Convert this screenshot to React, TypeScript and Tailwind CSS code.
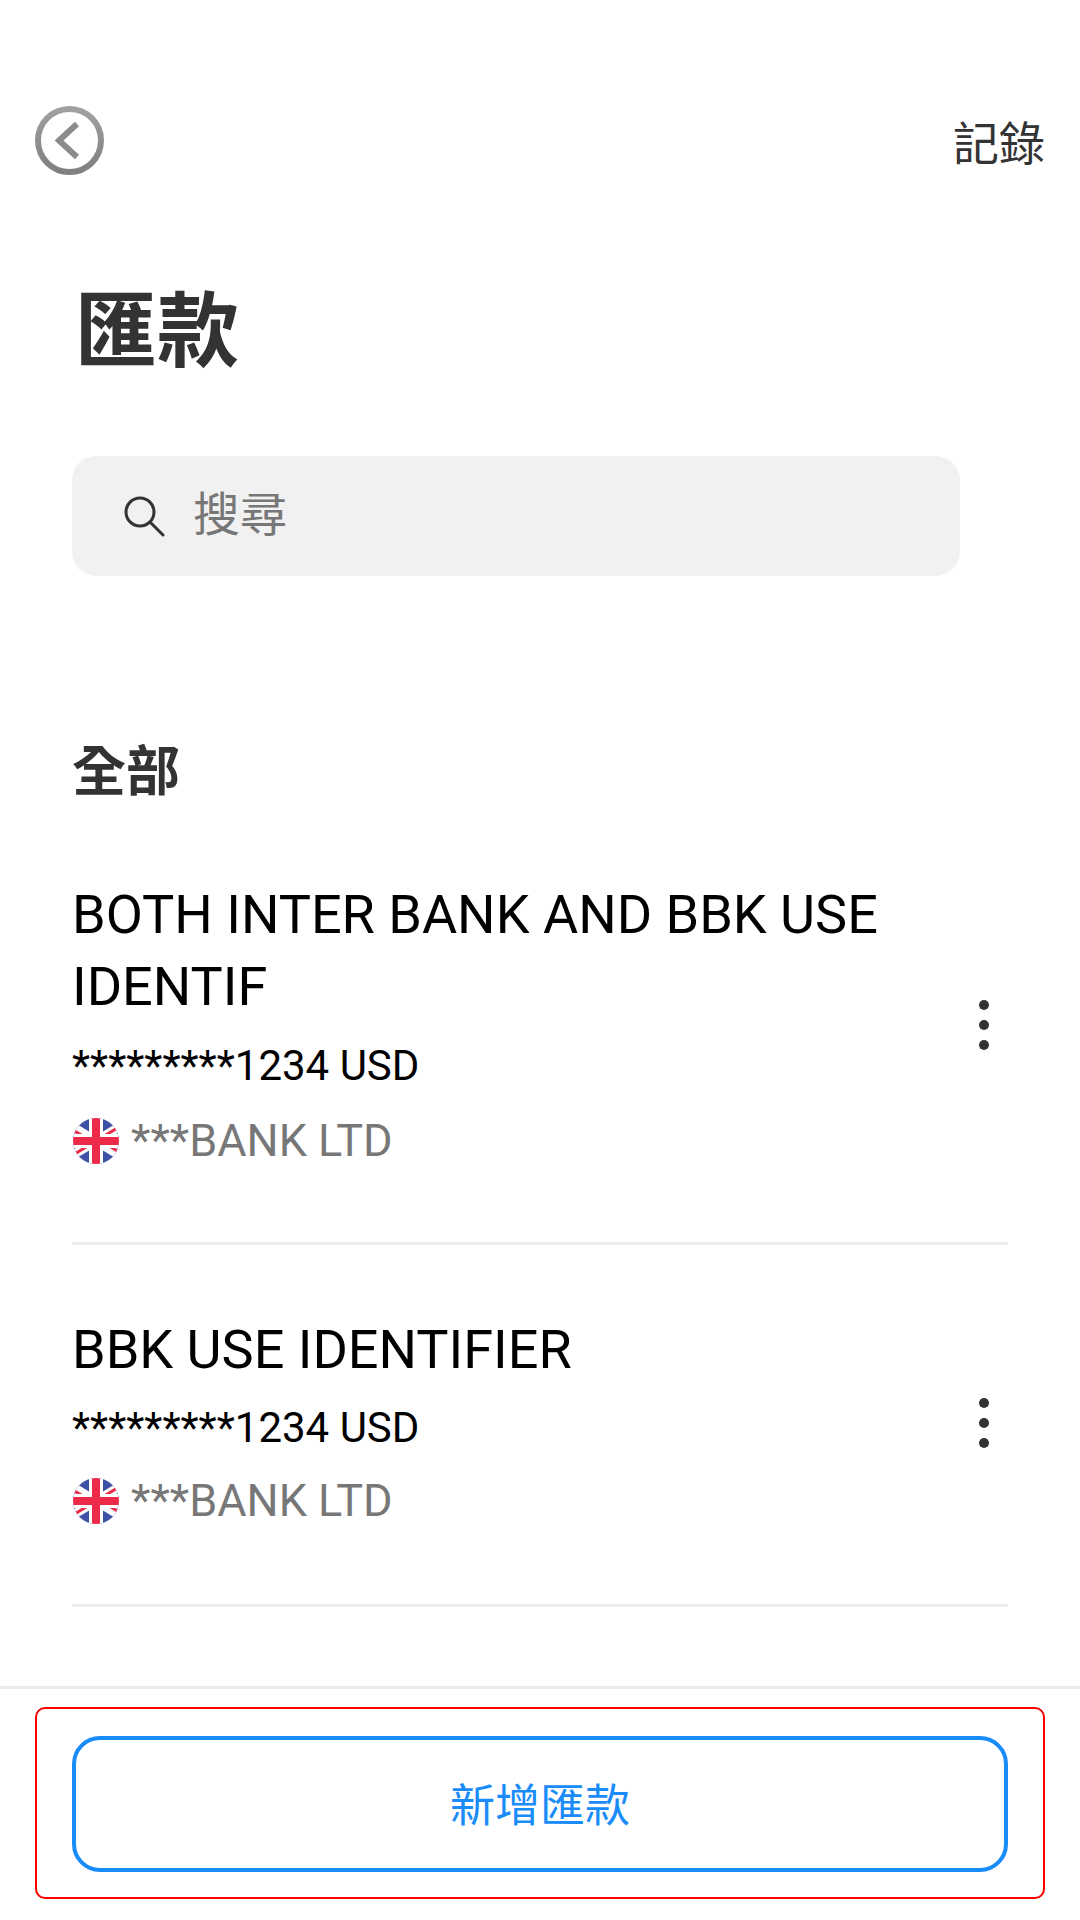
const cjk = "font-['Roboto','Noto_Sans_CJK_TC',sans-serif]";

function Flag({ id }: { id: string }) {
  return (
    <svg width="46" height="46" viewBox="0 0 46 46" className="shrink-0 ml-[1px]">
      <defs>
        <clipPath id={id}>
          <circle cx="23" cy="23" r="23" />
        </clipPath>
      </defs>
      <g clipPath={`url(#${id})`}>
        <rect width="46" height="46" fill="#3f51a5" />
        <path d="M-15 0L61 46M61 0L-15 46" stroke="#fff" strokeWidth="9" />
        <path d="M0 12L23 26M46 9L23 23M0 37L23 23M46 34L23 20" stroke="#ee2a4b" strokeWidth="3" />
        <path d="M23 0V46M0 23H46" stroke="#fff" strokeWidth="14" />
        <path d="M23 0V46M0 23H46" stroke="#ee2a4b" strokeWidth="8" />
      </g>
    </svg>
  );
}

function Dots() {
  return (
    <div className="flex flex-col gap-[10px] translate-y-[3px]">
      <div className="w-[10px] h-[10px] rounded-full bg-[#333]" />
      <div className="w-[10px] h-[10px] rounded-full bg-[#333]" />
      <div className="w-[10px] h-[10px] rounded-full bg-[#333]" />
    </div>
  );
}

function Row({
  title,
  id,
  pt,
  pb,
  subMt,
  bankMt,
}: {
  title: string;
  id: string;
  pt: string;
  pb: string;
  subMt: string;
  bankMt: string;
}) {
  return (
    <div className={`flex items-center justify-between border-b-[3px] border-[#eeeeee] ${pb} ${pt}`}>
      <div className="w-[880px]">
        <div className="text-[54px] leading-[72px] text-black">{title}</div>
        <div className={`text-[42px] leading-[48px] text-black ${subMt}`}>*********1234 USD</div>
        <div className={`flex items-center gap-[12px] ${bankMt}`}>
          <Flag id={id} />
          <span className="text-[45px] leading-[48px] text-[#777]">***BANK LTD</span>
        </div>
      </div>
      <div className="mr-[19px]">
        <Dots />
      </div>
    </div>
  );
}

export default function App() {
  return (
    <div className={`w-[1080px] h-[1920px] bg-white flex flex-col overflow-hidden ${cjk}`}>
      <div className="flex items-center justify-between pt-[106px] pl-[35px] pr-[35px]">
        <svg width="69" height="69" viewBox="0 0 69 69">
          <defs>
            <linearGradient id="backGrad" x1="0" y1="0" x2="0" y2="1">
              <stop offset="0" stopColor="#a0a0a0" />
              <stop offset="1" stopColor="#808080" />
            </linearGradient>
          </defs>
          <circle cx="34.5" cy="34.5" r="31.5" fill="none" stroke="url(#backGrad)" strokeWidth="6" />
          <path d="M42 18L24 34.5L42 51" fill="none" stroke="#8c8c8c" strokeWidth="6" />
        </svg>
        <span className="text-[46px] leading-[60px] text-[#333] translate-y-[3px]">記錄</span>
      </div>
      <div className="px-[72px] pt-[107px] grow flex flex-col">
        <h1 className="text-[82px] leading-[100px] font-bold text-[#333] ml-[3px]">匯款</h1>
        <div className="mt-[74px] w-[888px] h-[120px] rounded-[24px] bg-[#f1f1f1] flex items-center pl-[51px]">
          <svg width="42" height="42" viewBox="0 0 42 42" className="shrink-0">
            <circle cx="17" cy="17" r="14" fill="none" stroke="#333" strokeWidth="3" />
            <path d="M27 27L40 40" stroke="#333" strokeWidth="3" strokeLinecap="round" />
          </svg>
          <span className="ml-[28px] text-[47px] leading-[60px] text-[#777] -translate-y-[1px]">搜尋</span>
        </div>
        <div className="mt-[162px] text-[54px] leading-[70px] font-bold text-[#333]">全部</div>
        <div className="mt-[71px]">
          <Row
            title="BOTH INTER BANK AND BBK USE IDENTIF"
            id="f1"
            pt="pt-0"
            pb="pb-[77px]"
            subMt="mt-[19px]"
            bankMt="mt-[27px]"
          />
          <Row
            title="BBK USE IDENTIFIER"
            id="f2"
            pt="pt-[69px]"
            pb="pb-[79px]"
            subMt="mt-[18px]"
            bankMt="mt-[25px]"
          />
        </div>
      </div>
      <div className="border-t-[3px] border-[#ebebeb] pt-[18px] pb-[21px] px-[35px]">
        <div className="h-[192px] rounded-[10px] border-2 border-[#ff0000] flex items-center justify-center px-[35px] pt-[2px]">
          <button className="w-full h-[136px] rounded-[28px] border-4 border-[#1a8cfa] text-[45px] text-[#1a8cfa] pt-[6px]">
            新增匯款
          </button>
        </div>
      </div>
    </div>
  );
}
